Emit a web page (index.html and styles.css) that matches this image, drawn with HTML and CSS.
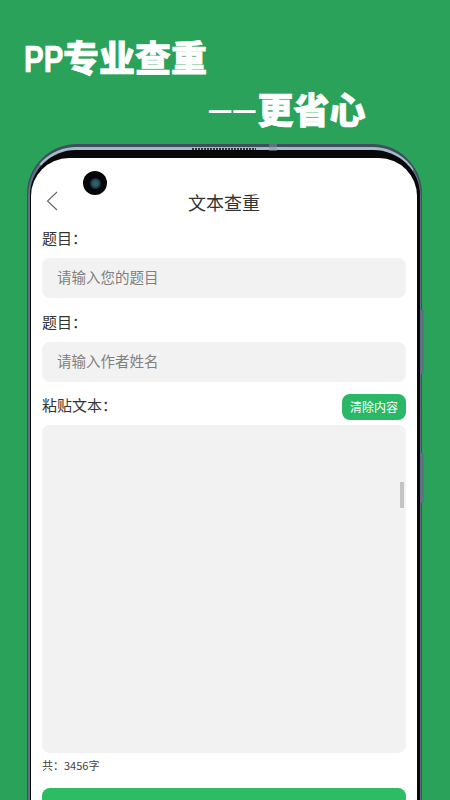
FILE: index.html
```html
<!DOCTYPE html>
<html lang="zh">
<head>
<meta charset="utf-8">
<title>文本查重</title>
<link rel="stylesheet" href="styles.css">
</head>
<body>
<main class="poster">
  <header class="headline">
    <h1 class="line-one"><span class="pp">PP</span>专业查重</h1>
    <p class="line-two"><span class="dashes">––</span>更省心</p>
  </header>
  <div class="phone">
    <span class="speaker"></span>
    <span class="sensor"></span>
    <span class="side-key key-a"></span>
    <span class="side-key key-b"></span>
    <div class="rim">
      <div class="bezel">
        <span class="camera"><span class="lens"></span></span>
        <section class="screen">
          <div class="titlebar">
            <svg class="back" viewBox="0 0 12 20" width="12" height="20"><path d="M11 1 1.5 10 11 19" fill="none" stroke="#666" stroke-width="1.1"/></svg>
            <span class="title">文本查重</span>
          </div>
          <div class="form">
            <label class="label first">题目：</label>
            <div class="field">请输入您的题目</div>
            <label class="label">题目：</label>
            <div class="field">请输入作者姓名</div>
            <div class="paste-head">
              <span class="label-text">粘贴文本：</span>
              <button class="clear">清除内容</button>
            </div>
            <div class="textarea"><span class="scroll"></span></div>
            <div class="count">共：3456字</div>
            <div class="submit"></div>
          </div>
        </section>
      </div>
    </div>
  </div>
</main>
</body>
</html>
```
FILE: styles.css
```css
* { box-sizing: border-box; }
html, body { margin: 0; padding: 0; }
body { width: 450px; height: 800px; overflow: hidden; font-family: "Noto Sans CJK SC", "Noto Sans", sans-serif; }
.poster { width: 450px; height: 800px; overflow: hidden; background: #2ba25a; display: flex; flex-direction: column; }
.headline { flex: none; height: 144px; padding: 30px 0 0 24px; color: #fff; }
.line-one { margin: 0; font-size: 36px; line-height: 52px; font-weight: 900; -webkit-text-stroke: .7px #fff; }
.pp { display: inline-block; font-family: "Liberation Sans", sans-serif; font-weight: 700; transform: scaleX(.82); transform-origin: left center; margin-right: -9px; }
.line-two { margin: 0; font-size: 36px; line-height: 44px; font-weight: 900; padding-left: 185px; display: flex; align-items: center; -webkit-text-stroke: .7px #fff; }
.dashes { font-family: "Liberation Sans", sans-serif; font-size: 40px; font-weight: 400; letter-spacing: 2px; line-height: 44px; -webkit-text-stroke: 0; }
.phone { position: relative; margin-left: 27px; width: 395px; flex: 1; min-height: 0; }
.rim { height: 100%; border-radius: 50px 50px 0 0; background: #3f4e5a; padding: 3px 1px 0; }
.bezel { position: relative; height: 100%; border-radius: 48px 48px 0 0; background: #08080a; border: solid #5f7282; border-top-color: #a3bacb; border-width: 3px 1px 0 2px; padding: 8px 3px 0 1px; }
.screen { height: 100%; width: 386px; background: #fff; border-radius: 38px 38px 0 0; overflow: hidden; }
.speaker { position: absolute; z-index: 2; left: 165px; top: 4px; width: 64px; height: 2px; background: repeating-linear-gradient(90deg, #2e363d 0 2px, #a9bccb 2px 3px); }
.sensor { position: absolute; z-index: 2; left: 242px; top: 0; width: 8px; height: 7px; background: #8496a3; opacity: .5; }
.side-key { position: absolute; right: -2px; width: 3px; background: #5f7186; }
.key-a { top: 166px; height: 64px; }
.key-b { top: 309px; height: 50px; }
.camera { position: absolute; left: 53px; top: 21px; width: 24px; height: 24px; border-radius: 50%; background: #060608; display: flex; align-items: center; justify-content: center; z-index: 3; }
.lens { width: 11px; height: 11px; border-radius: 50%; background: radial-gradient(circle, #2f5f6e 0 30%, #16303a 65%, #0c1216 100%); }
.titlebar { position: relative; height: 66px; display: flex; align-items: center; justify-content: center; padding-top: 22px; }
.back { position: absolute; left: 15px; top: 33px; }
.title { font-size: 18px; color: #333; line-height: 24px; font-weight: 400; }
.form { padding: 0 11px; }
.label, .label-text { display: block; font-size: 15px; color: #333; }
.label { line-height: 18px; margin: 15px 0 11px; }
.label.first { margin-top: 5px; }
.label-text { line-height: 20px; padding-bottom: 5px; }
.field { height: 40px; border-radius: 8px; background: #f2f2f2; color: #808080; font-size: 14.5px; line-height: 38px; padding-left: 15px; }
.paste-head { display: flex; justify-content: space-between; align-items: center; margin-top: 12px; height: 26px; }
.clear { border: 0; width: 64px; height: 26px; padding: 0; border-radius: 8px; background: #2bb866; color: #fff; font: 400 12px/26px "Noto Sans CJK SC", sans-serif; }
.textarea { position: relative; margin-top: 5px; height: 328px; border-radius: 8px; background: #f2f2f2; }
.scroll { position: absolute; right: 2px; top: 57px; width: 4px; height: 26px; background: #c4c4c4; }
.count { font-size: 11px; line-height: 16px; color: #444; margin-top: 4px; }
.submit { margin-top: 15px; height: 50px; border-radius: 8px; background: #2dbb63; }
```
